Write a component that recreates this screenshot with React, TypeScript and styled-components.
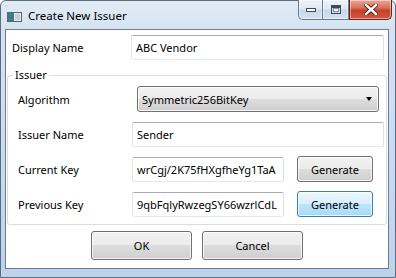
import React from 'react'
import styled, { createGlobalStyle } from 'styled-components'

const GlobalStyle = createGlobalStyle`
  html, body { margin: 0; padding: 0; background: #fff; }
  body { font-family: "Noto Sans", "Open Sans", sans-serif; font-size: 11px; color: #000; }
  * { box-sizing: border-box; }
`

const Window = styled.div`
  width: 396px;
  height: 278px;
  display: flex;
  flex-direction: column;
  border: 1px solid #5c6b7d;
  border-radius: 6px 6px 0 0;
  background: linear-gradient(180deg, #e2ecf6 0%, #d5e3f1 10%, #cadcef 50%, #bdd3ea 100%);
`

const TitleBar = styled.div`
  height: 28px;
  display: flex;
  align-items: flex-start;
  padding-left: 6px;
`

const AppIcon = styled.svg`
  margin-top: 11px;
  flex: none;
`

const Title = styled.span`
  margin-top: 7px;
  margin-left: 6px;
  font-size: 11.5px;
  color: #000;
`

const Captions = styled.div`
  margin-left: auto;
  margin-top: -1px;
  margin-right: 3px;
  display: flex;
  height: 20px;
`

const CaptionButton = styled.div<{ $w: number; $close?: boolean; $first?: boolean }>`
  width: ${p => p.$w}px;
  height: 20px;
  display: flex;
  align-items: center;
  justify-content: center;
  border: 1px solid ${p => (p.$close ? '#6b2317' : '#6b7a8e')};
  border-left-width: ${p => (p.$first || p.$close ? 1 : 0)}px;
  border-top: none;
  border-radius: ${p => (p.$first ? '0 0 0 5px' : p.$close ? '0 0 5px 0' : '0')};
  background: ${p =>
    p.$close
      ? 'linear-gradient(180deg, #e9a796 0%, #d8735d 40%, #c4402a 55%, #d4583f 100%)'
      : 'linear-gradient(180deg, #eef3fa 0%, #dfe8f3 45%, #c9d7e8 55%, #d6e2ef 100%)'};
  box-shadow: inset 0 0 0 1px rgba(255, 255, 255, 0.45);
`

const Frame = styled.div`
  flex: 1;
  display: flex;
  padding: 0 6px 8px 4px;
`

const Client = styled.div`
  flex: 1;
  display: flex;
  flex-direction: column;
  background: #fff;
  border: 1px solid #6b7d92;
`

const Row = styled.div`
  display: flex;
  align-items: center;
  height: 25px;
  margin-top: 5px;
`

const Label = styled.span<{ $w: number; $pad: number }>`
  width: ${p => p.$w}px;
  padding-left: ${p => p.$pad}px;
  flex: none;
  white-space: nowrap;
`

const TextBox = styled.div<{ $w: number }>`
  width: ${p => p.$w}px;
  height: 25px;
  flex: none;
  display: flex;
  align-items: center;
  padding: 0 4px;
  overflow: hidden;
  white-space: nowrap;
  border: 1px solid;
  border-color: #abadb3 #dbdfe6 #e3e9ef #e2e3ea;
  border-radius: 2px;
  background: #fff;
`

const Group = styled.fieldset`
  margin: 7px 1px 0 1px;
  padding: 3px 2px 7px 10px;
  border: 1px solid #d5dfe5;
  border-radius: 3px;
`

const Legend = styled.legend`
  margin-left: -5px;
  padding: 0 2px;
  line-height: 16px;
`

const Grid = styled.div`
  display: grid;
  grid-template-columns: 114px 252px;
  grid-auto-rows: 26px;
  row-gap: 9px;
  align-items: center;
`

const Combo = styled.div`
  margin: 0 5px;
  height: 26px;
  display: flex;
  align-items: center;
  padding: 0 6px 0 4px;
  border: 1px solid #707070;
  border-radius: 3px;
  background: linear-gradient(180deg, #f2f2f2 0%, #ebebeb 50%, #dddddd 50%, #cfcfcf 100%);
  box-shadow: inset 0 0 0 1px rgba(255, 255, 255, 0.8);
`

const Arrow = styled.span`
  margin-left: auto;
  width: 0;
  height: 0;
  border-left: 3.5px solid transparent;
  border-right: 3.5px solid transparent;
  border-top: 4px solid #000;
`

const KeyRow = styled.div`
  display: flex;
  align-items: center;
  gap: 13px;
`

const Button = styled.button<{ $w: number; $h: number; $hot?: boolean }>`
  width: ${p => p.$w}px;
  height: ${p => p.$h}px;
  flex: none;
  padding: 0;
  font: inherit;
  color: #000;
  border: 1px solid ${p => (p.$hot ? '#3c7fb1' : '#707070')};
  border-radius: 3px;
  background: ${p =>
    p.$hot
      ? 'linear-gradient(180deg, #eaf6fd 0%, #d9f0fc 50%, #bee6fd 50%, #a7d9f5 100%)'
      : 'linear-gradient(180deg, #f2f2f2 0%, #ebebeb 50%, #dddddd 50%, #cfcfcf 100%)'};
  box-shadow: inset 0 0 0 1px rgba(255, 255, 255, 0.75);
`

const Footer = styled.div`
  display: flex;
  justify-content: center;
  gap: 10px;
  margin-top: 6px;
`

export default function App() {
  return (
    <>
      <GlobalStyle />
      <Window>
        <TitleBar>
          <AppIcon width="15" height="10" viewBox="0 0 15 10">
            <rect x="0.5" y="0.5" width="14" height="9" fill="#e8ecef" stroke="#5a6570" />
            <rect x="1" y="1" width="6" height="8" fill="#3c7f86" />
            <rect x="8" y="2" width="5" height="6" fill="#c9cfd4" />
          </AppIcon>
          <Title>Create New Issuer</Title>
          <Captions>
            <CaptionButton $w={25} $first>
              <svg width="10" height="4" viewBox="0 0 10 4">
                <rect x="0.5" y="0.5" width="9" height="3" fill="#fff" stroke="#3d4a5a" />
              </svg>
            </CaptionButton>
            <CaptionButton $w={26}>
              <svg width="10" height="9" viewBox="0 0 10 9">
                <rect x="0.5" y="0.5" width="9" height="8" fill="none" stroke="#3d4a5a" />
                <rect x="1" y="1" width="8" height="2" fill="#3d4a5a" />
                <rect x="2.5" y="3.5" width="5" height="3" fill="#fff" stroke="#8090a2" />
              </svg>
            </CaptionButton>
            <CaptionButton $w={43} $close>
              <svg width="14" height="11" viewBox="0 0 14 11">
                <path d="M2 1 L12 10 M12 1 L2 10" stroke="#4a1a12" strokeWidth="4.2" strokeLinecap="square" />
                <path d="M2 1 L12 10 M12 1 L2 10" stroke="#fff" strokeWidth="2.4" strokeLinecap="square" />
              </svg>
            </CaptionButton>
          </Captions>
        </TitleBar>
        <Frame>
          <Client>
            <Row>
              <Label $w={125} $pad={6}>Display Name</Label>
              <TextBox $w={253}>ABC Vendor</TextBox>
            </Row>
            <Group>
              <Legend>Issuer</Legend>
              <Grid>
                <Label $w={114} $pad={0}>Algorithm</Label>
                <Combo>
                  Symmetric256BitKey
                  <Arrow />
                </Combo>
                <Label $w={114} $pad={0}>Issuer Name</Label>
                <TextBox $w={252}>Sender</TextBox>
                <Label $w={114} $pad={0}>Current Key</Label>
                <KeyRow>
                  <TextBox $w={152}>wrCgj/2K75fHXgfheYg1TaA</TextBox>
                  <Button $w={76} $h={26}>Generate</Button>
                </KeyRow>
                <Label $w={114} $pad={0}>Previous Key</Label>
                <KeyRow>
                  <TextBox $w={152}>9qbFqlyRwzegSY66wzrlCdL</TextBox>
                  <Button $w={76} $h={26} $hot>Generate</Button>
                </KeyRow>
              </Grid>
            </Group>
            <Footer>
              <Button $w={101} $h={29}>OK</Button>
              <Button $w={101} $h={29}>Cancel</Button>
            </Footer>
          </Client>
        </Frame>
      </Window>
    </>
  )
}
